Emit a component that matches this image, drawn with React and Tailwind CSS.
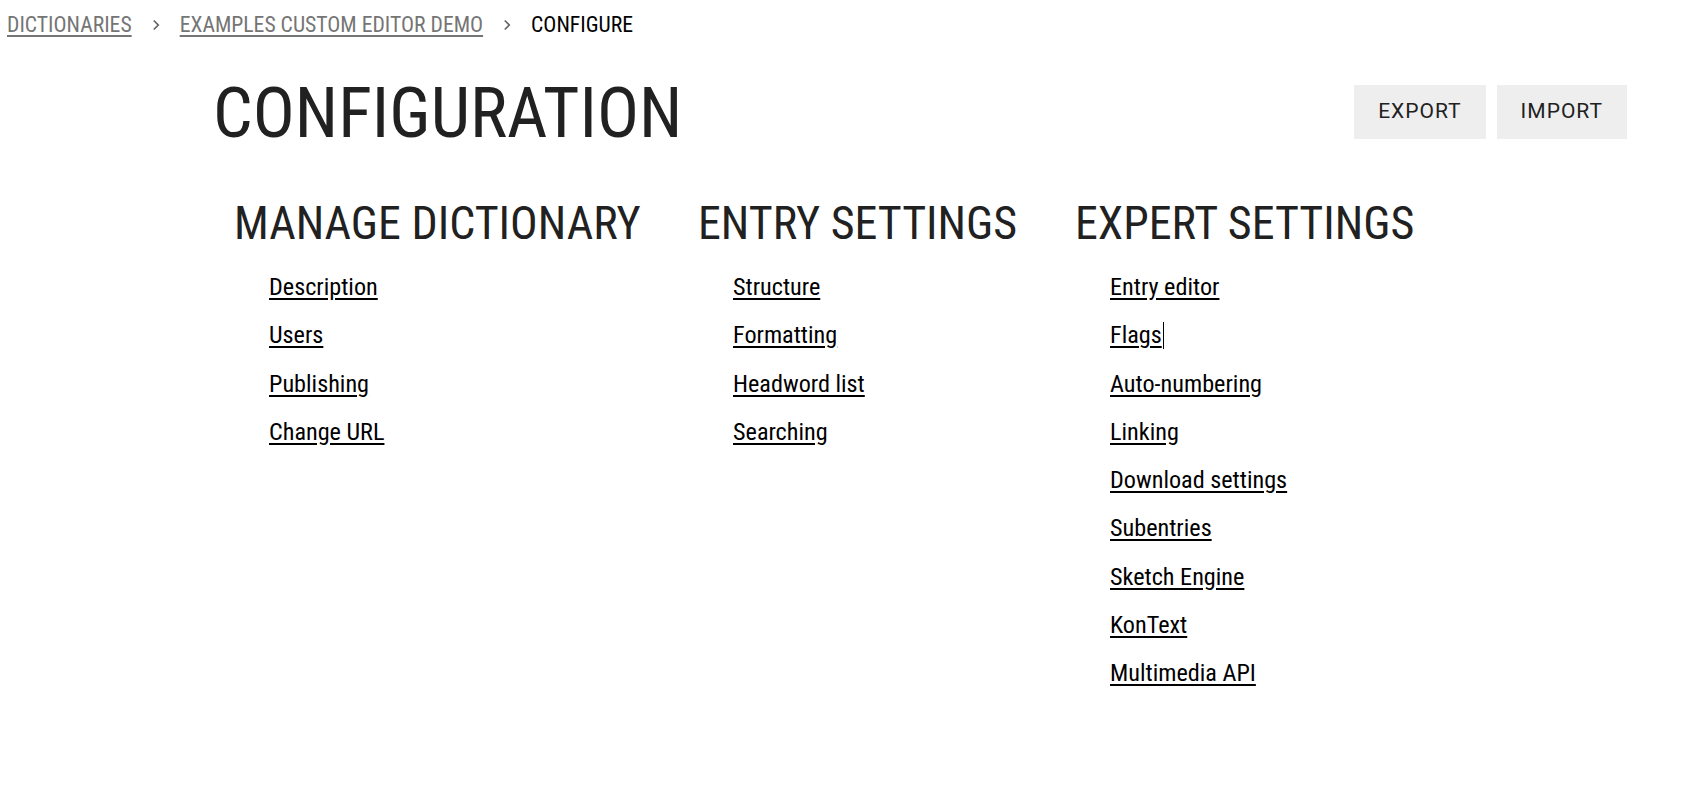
import React from 'react';

const cond = { fontFamily: '"Roboto Condensed", Roboto, "Liberation Sans Narrow", sans-serif' };

const columns = [
  { title: 'MANAGE DICTIONARY', width: 'w-[464px]', links: ['Description', 'Users', 'Publishing', 'Change URL'] },
  { title: 'ENTRY SETTINGS', width: 'w-[377px]', links: ['Structure', 'Formatting', 'Headword list', 'Searching'] },
  {
    title: 'EXPERT SETTINGS',
    width: 'w-[400px]',
    links: ['Entry editor', 'Flags', 'Auto-numbering', 'Linking', 'Download settings', 'Subentries', 'Sketch Engine', 'KonText', 'Multimedia API'],
  },
];

function Chevron() {
  return (
    <svg width="18" height="18" viewBox="0 0 24 24" className="mx-[15px] text-[#616161]">
      <path d="M9 6l6 6-6 6" fill="none" stroke="currentColor" strokeWidth="2.2" />
    </svg>
  );
}

export default function App() {
  return (
    <div className="min-h-screen bg-white font-stretch-condensed text-[#212121]" style={cond}>
      {/* breadcrumb */}
      <nav className="flex items-center pl-[7px] pt-[9px] text-[21.7px] leading-[32px]">
        <a href="#" className="text-[#757575] underline underline-offset-[3px]">DICTIONARIES</a>
        <Chevron />
        <a href="#" className="text-[#757575] underline underline-offset-[3px]">EXAMPLES CUSTOM EDITOR DEMO</a>
        <Chevron />
        <span className="text-black">CONFIGURE</span>
      </nav>

      <main className="pl-[213px] pr-[62px]">
        <div className="flex items-start justify-between">
          <h1 className="mt-[30px] text-[70px] leading-[84px] font-normal">CONFIGURATION</h1>
          <div className="mt-[44px] flex gap-[11px] font-stretch-normal" style={{ fontFamily: 'Roboto, sans-serif' }}>
            <button className="h-[54px] bg-[#eeeeee] px-[24px] text-[21px] tracking-[1px] text-[#212121]">EXPORT</button>
            <button className="h-[54px] bg-[#eeeeee] px-[24px] text-[21px] tracking-[1px] text-[#212121]">IMPORT</button>
          </div>
        </div>

        <div className="mt-[42px] ml-[21px] flex">
          {columns.map((col) => (
            <section key={col.title} className={col.width}>
              <h2 className="text-[46px] leading-[52px] font-normal">{col.title}</h2>
              <ul className="mt-[14px] pl-[35px] text-[24.2px] leading-[48.3px] text-black">
                {col.links.map((l) => (
                  <li key={l}>
                    <a href="#" className="underline underline-offset-[3px]">{l}</a>
                    {l === 'Flags' && <span className="ml-[1px] inline-block h-[27px] w-[1px] bg-black align-[-6px]" />}
                  </li>
                ))}
              </ul>
            </section>
          ))}
        </div>
      </main>
    </div>
  );
}
